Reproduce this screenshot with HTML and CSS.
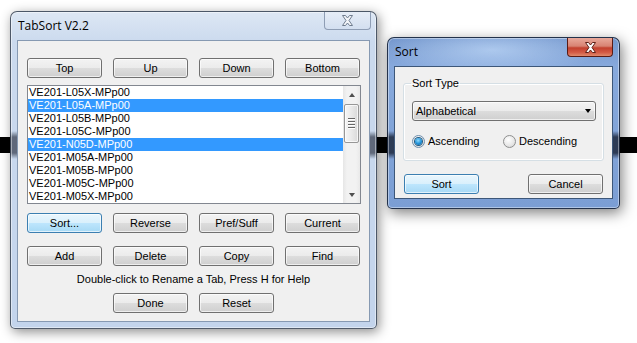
FILE: index.html
```html
<!DOCTYPE html>
<html lang="en">
<head>
  <meta charset="UTF-8">
  <title>TabSort V2.2</title>
  <link rel="stylesheet" href="styles.css">
</head>
<body>
  <div class="win win-main">
    <div class="titlebar">
      <span class="title">TabSort V2.2</span>
      <span class="close">
        <svg width="13" height="11" viewBox="0 0 13 11"><path d="M1.5 0.5H4.5L6.5 3L8.5 0.5H11.5L8 5.5L11.5 10.5H8.5L6.5 8L4.5 10.5H1.5L5 5.5Z"/></svg>
      </span>
    </div>
    <div class="client main-client">
      <div class="btn-row">
        <button class="btn">Top</button>
        <button class="btn">Up</button>
        <button class="btn">Down</button>
        <button class="btn">Bottom</button>
      </div>

      <div class="listbox">
        <ul class="items">
          <li>VE201-L05X-MPp00</li>
          <li class="sel">VE201-L05A-MPp00</li>
          <li>VE201-L05B-MPp00</li>
          <li>VE201-L05C-MPp00</li>
          <li class="sel">VE201-N05D-MPp00</li>
          <li>VE201-M05A-MPp00</li>
          <li>VE201-M05B-MPp00</li>
          <li>VE201-M05C-MPp00</li>
          <li>VE201-M05X-MPp00</li>
        </ul>
        <div class="vscroll">
          <span class="arrow up"></span>
          <span class="track">
            <span class="thumb"><i></i><i></i><i></i><i></i></span>
          </span>
          <span class="arrow down"></span>
        </div>
      </div>

      <div class="btn-row row2">
        <button class="btn default">Sort...</button>
        <button class="btn">Reverse</button>
        <button class="btn">Pref/Suff</button>
        <button class="btn">Current</button>
      </div>
      <div class="btn-row row3">
        <button class="btn">Add</button>
        <button class="btn">Delete</button>
        <button class="btn">Copy</button>
        <button class="btn">Find</button>
      </div>
      <p class="hint">Double-click to Rename a Tab, Press H for Help</p>
      <div class="btn-row row4">
        <button class="btn col2">Done</button>
        <button class="btn">Reset</button>
      </div>
    </div>
  </div>

  <div class="win win-sort active">
    <div class="titlebar">
      <span class="title">Sort</span>
      <span class="close">
        <svg width="13" height="11" viewBox="0 0 13 11"><path d="M1.5 0.5H4.5L6.5 3L8.5 0.5H11.5L8 5.5L11.5 10.5H8.5L6.5 8L4.5 10.5H1.5L5 5.5Z"/></svg>
      </span>
    </div>
    <div class="client sort-client">
      <fieldset class="group">
        <legend>Sort Type</legend>
        <div class="combo"><span>Alphabetical</span><span class="combo-arrow"></span></div>
        <div class="radios">
          <label class="radio"><span class="dot checked"></span>Ascending</label>
          <label class="radio"><span class="dot"></span>Descending</label>
        </div>
      </fieldset>
      <div class="dlg-buttons">
        <button class="btn default">Sort</button>
        <button class="btn">Cancel</button>
      </div>
    </div>
  </div>
</body>
</html>
```

FILE: styles.css
```css
body {
  margin: 0;
  width: 637px;
  height: 343px;
  overflow: hidden;
  position: relative;
  font-family: "Liberation Sans", Arial, sans-serif;
  font-size: 11px;
  color: #000;
  background: linear-gradient(to bottom, #fff 137px, #000 137px, #000 153px, #fff 153px);
}

/* window frames */
.win {
  position: absolute;
  box-sizing: border-box;
  border: 1px solid rgba(45, 55, 70, 0.8);
  border-radius: 7px 7px 5px 5px;
  padding: 0 6px 6px;
  box-shadow: inset 0 0 0 1px rgba(255, 255, 255, 0.45), 2px 3px 12px rgba(0, 0, 0, 0.45);
}

.win-main {
  left: 10px;
  top: 11px;
  width: 367px;
  height: 318px;
  background:
    linear-gradient(to bottom, transparent 119px, rgba(25, 30, 45, 0.6) 125px, rgba(25, 30, 45, 0.6) 141px, transparent 147px),
    linear-gradient(to bottom, #dde7f4, #cbdaee 30px, #c3d4ec);
}

.win-sort {
  left: 387px;
  top: 37px;
  width: 233px;
  padding-bottom: 9px;
  border-color: rgba(20, 30, 50, 0.85);
  background:
    linear-gradient(to bottom, transparent 93px, rgba(10, 15, 30, 0.7) 99px, rgba(10, 15, 30, 0.7) 115px, transparent 121px),
    radial-gradient(ellipse 110px 26px at 45% 12px, rgba(205, 228, 255, 0.6), transparent),
    linear-gradient(to bottom, #7497cd, #87a9dc 28px, #7b9ed4);
  box-shadow: inset 0 0 0 1px rgba(255, 255, 255, 0.4), 2px 4px 14px rgba(0, 0, 0, 0.5);
}

.titlebar {
  display: flex;
  justify-content: space-between;
  height: 28px;
}

.title {
  padding-left: 1px;
  line-height: 28px;
  font-family: "Open Sans", "Noto Sans", sans-serif;
  font-size: 12px;
}

.close {
  box-sizing: border-box;
  width: 47px;
  height: 18px;
  margin-right: -1px;
  display: flex;
  align-items: center;
  justify-content: center;
  border: 1px solid #8e9db4;
  border-top: none;
  border-radius: 0 0 4px 4px;
  background: linear-gradient(to bottom, #e6edf7, #d3dff0);
}

.close svg path {
  fill: #f3f5f9;
  stroke: #6f7c8e;
  stroke-width: 1;
}

.active .close {
  width: 46px;
  height: 19px;
  margin-right: 0;
  border-color: #5a1b14;
  background: linear-gradient(to bottom, #e9a99b 0, #d88373 45%, #c2402e 55%, #d35a45 80%, #e08a6c 100%);
}

.active .close svg path {
  fill: #fff;
  stroke: #5e2118;
}

.client {
  box-sizing: border-box;
  border: 1px solid #8699b2;
  background: #f0f0f0;
}

.active .client {
  border-color: #3d5779;
}

/* main window contents */
.main-client {
  height: 282px;
  padding: 17px 9px 0;
}

.btn-row {
  display: grid;
  grid-template-columns: repeat(4, 75px);
  column-gap: 11px;
}

.row2 { margin-top: 9px; }
.row3 { margin-top: 13px; }
.row4 { margin-top: 7px; }
.col2 { grid-column: 2; }

.btn {
  box-sizing: border-box;
  width: 75px;
  height: 20px;
  padding: 0;
  border: 1px solid #707070;
  border-radius: 3px;
  background: linear-gradient(to bottom, #f3f3f3 0, #ebebeb 50%, #dddddd 50%, #cfcfcf 100%);
  box-shadow: inset 0 0 0 1px rgba(255, 255, 255, 0.65);
  font-family: "Liberation Sans", Arial, sans-serif;
  font-size: 11px;
  color: #000;
}

.btn.default {
  border-color: #3c7fb1;
  background: linear-gradient(to bottom, #eaf6fd 0, #d9f0fc 50%, #bee6fd 50%, #a7d9f5 100%);
}

.listbox {
  display: flex;
  box-sizing: border-box;
  width: 334px;
  height: 119px;
  margin-top: 7px;
  border: 1px solid #828790;
  background: #fff;
}

.items {
  flex: 1;
  list-style: none;
  margin: 0;
  padding: 0;
}

.items li {
  height: 13px;
  line-height: 13px;
  padding-left: 1px;
  white-space: nowrap;
}

.items li.sel {
  background: #3399ff;
  color: #fff;
}

.vscroll {
  width: 17px;
  display: flex;
  flex-direction: column;
  background: linear-gradient(to right, #e6e6e6, #f2f2f2 4px, #f2f2f2 13px, #e9e9e9);
}

.arrow {
  height: 17px;
  display: flex;
  align-items: center;
  justify-content: center;
}

.arrow::before {
  content: "";
  border-left: 3.5px solid transparent;
  border-right: 3.5px solid transparent;
}

.arrow.up::before { border-bottom: 4px solid #4f4f4f; }
.arrow.down::before { border-top: 4px solid #4f4f4f; }

.track {
  flex: 1;
}

.thumb {
  box-sizing: border-box;
  height: 39px;
  margin: 1px 1px 0;
  display: flex;
  flex-direction: column;
  align-items: center;
  justify-content: center;
  gap: 1px;
  border: 1px solid #979797;
  border-radius: 2px;
  background: linear-gradient(to right, #f6f6f6, #e9e9e9 50%, #d9d9d9);
  box-shadow: inset 0 0 0 1px rgba(255, 255, 255, 0.7);
}

.thumb i {
  width: 7px;
  height: 1px;
  background: #666;
  border-bottom: 1px solid #fff;
}

.hint {
  margin: 6px 0 0;
  line-height: 14px;
  text-align: center;
}

/* sort dialog contents */
.sort-client {
  padding: 0 8px;
}

.group {
  margin: 10px 0 0;
  padding: 0 7px 12px 8px;
  border: 1px solid #d5dfe5;
  border-radius: 3px;
  box-shadow: inset 0 0 0 1px #fff;
}

.group legend {
  margin-left: -1px;
  padding: 0 1px;
  line-height: 13px;
}

.combo {
  box-sizing: border-box;
  height: 20px;
  margin-top: 11px;
  padding: 0 4px 0 3px;
  display: flex;
  align-items: center;
  justify-content: space-between;
  border: 1px solid #707070;
  border-radius: 3px;
  background: linear-gradient(to bottom, #f3f3f3 0, #ebebeb 50%, #dddddd 50%, #cfcfcf 100%);
  box-shadow: inset 0 0 0 1px rgba(255, 255, 255, 0.65);
}

.combo-arrow {
  border-left: 3.5px solid transparent;
  border-right: 3.5px solid transparent;
  border-top: 4px solid #000;
}

.radios {
  display: grid;
  grid-template-columns: 91px auto;
  margin-top: 14px;
  height: 13px;
}

.radio {
  display: flex;
  align-items: center;
  gap: 3px;
  line-height: 13px;
}

.dot {
  box-sizing: border-box;
  width: 13px;
  height: 13px;
  border-radius: 50%;
  border: 1px solid #8e8f8f;
  background: radial-gradient(circle at 40% 35%, #fff, #e6e6e6 60%, #cfcfcf);
  display: flex;
  align-items: center;
  justify-content: center;
}

.dot.checked {
  border-color: #6f8fae;
}

.dot.checked::before {
  content: "";
  width: 7px;
  height: 7px;
  border-radius: 50%;
  background: radial-gradient(circle at 45% 35%, #8fdcff, #1e8fd6 55%, #0d5a95);
  box-shadow: 0 0 0 1px #23597f;
}

.dlg-buttons {
  display: flex;
  justify-content: space-between;
  margin: 13px 1px 0;
  padding-bottom: 4px;
}
```
